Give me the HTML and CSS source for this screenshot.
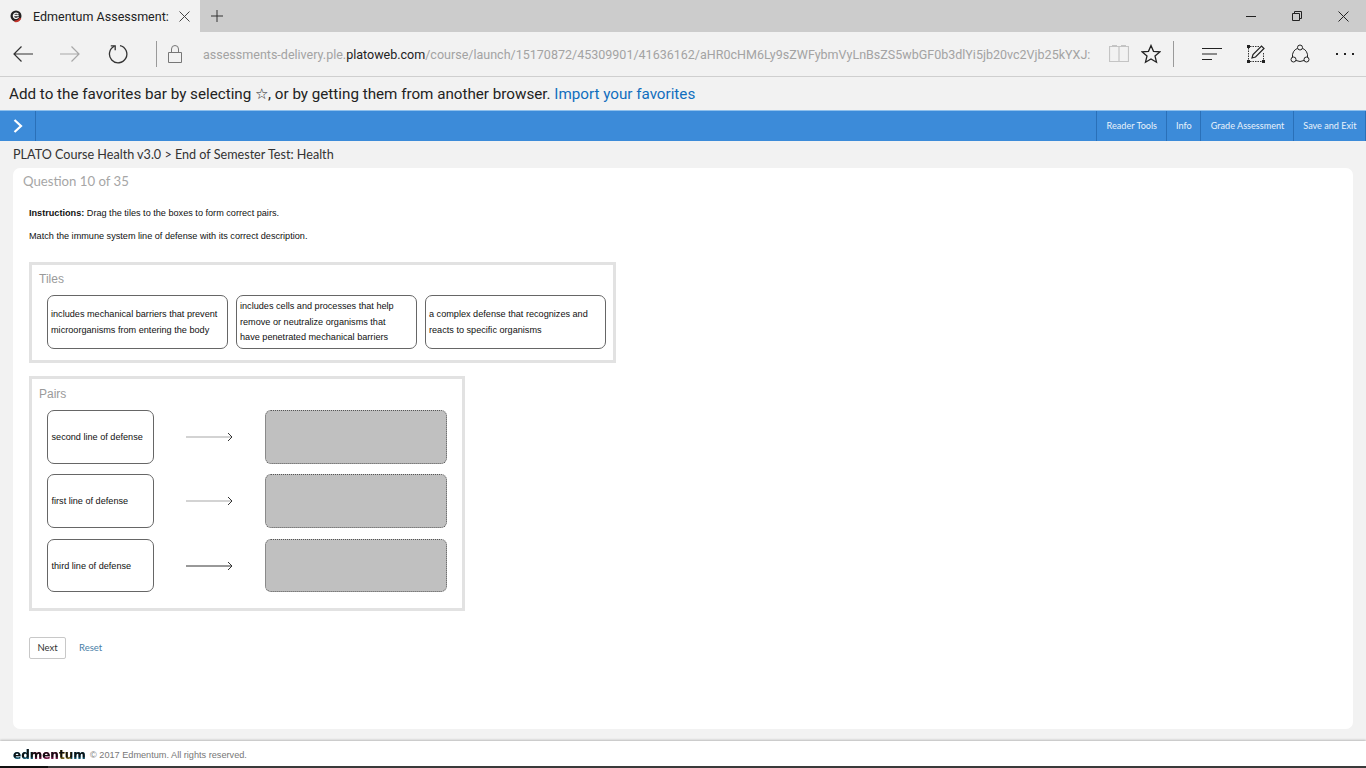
FILE: index.html
```html
<!DOCTYPE html>
<html lang="en">
<head>
<meta charset="utf-8">
<title>Edmentum Assessment</title>
<link rel="stylesheet" href="styles.css">
</head>
<body>
<div class="tabstrip">
  <div class="tab">
    <svg class="favicon" width="14" height="14" viewBox="0 0 14 14"><circle cx="7" cy="7" r="5.5" fill="#222"/><path d="M4.500 6.500h5.200M9.300 5.200A2.700 2.700 0 1 0 9.500 8" fill="none" stroke="#f2f2f2" stroke-width="1.300"/><path d="M5.500 12.200a5.500 5.500 0 0 0 6-3" stroke="#c8352b" stroke-width="1.800" fill="none"/></svg>
    <span class="tab-title">Edmentum Assessment:</span>
    <svg class="tab-close" width="11" height="11" viewBox="0 0 11 11"><path d="M.5 .5l10 10M10.500 .5l-10 10" stroke="#444" fill="none"/></svg>
  </div>
  <svg class="tab-new" width="12" height="12" viewBox="0 0 12 12"><path d="M6 0v12M0 6h12" stroke="#333" fill="none"/></svg>
  <div class="winbtns">
    <svg width="10" height="10" viewBox="0 0 10 10"><path d="M0 5.500h10" stroke="#222" fill="none"/></svg>
    <svg width="10" height="10" viewBox="0 0 10 10"><path d="M.5 2.500h7v7h-7zM2.500 2.500v-2h7v7h-2" stroke="#222" fill="none"/></svg>
    <svg width="11" height="11" viewBox="0 0 11 11"><path d="M.5 .5l10 10M10.500 .5l-10 10" stroke="#222" fill="none"/></svg>
  </div>
</div>
<div class="addressbar">
  <svg class="nav-back" width="20" height="16" viewBox="0 0 20 16"><path d="M1 8h19M8.500 .5L1 8l7.500 7.500" stroke="#333" stroke-width="1.200" fill="none"/></svg>
  <svg class="nav-forward" width="20" height="16" viewBox="0 0 20 16"><path d="M0 8h19M11.500 .5L19 8l-7.500 7.500" stroke="#a8a8a8" stroke-width="1.200" fill="none"/></svg>
  <svg class="nav-reload" width="20" height="20" viewBox="0 0 20 20"><path d="M6.500 2.200A8.700 8.700 0 1 0 12 1.600" stroke="#333" stroke-width="1.300" fill="none"/><path d="M2.800 1.800h4.400v4.400" stroke="#333" stroke-width="1.300" fill="none"/></svg>
  <span class="sep sep-left"></span>
  <svg class="lock" width="14" height="18" viewBox="0 0 14 18"><path d="M.5 7.500h13v10H.5zM3.500 7.500V4a3.500 3.500 0 0 1 7 0v3.500" stroke="#777" fill="none"/></svg>
  <div class="url"><span class="url-dim">assessments-delivery.ple.</span><span class="url-main">platoweb.com</span><span class="url-dim">/course/launch/15170872/45309901/41636162/aHR0cHM6Ly9sZWFybmVyLnBsZS5wbGF0b3dlYi5jb20vc2Vjb25kYXJ:</span></div>
  <svg class="book" width="20" height="18" viewBox="0 0 20 18"><path d="M.5 1.500h19v15H.5zM10 1.500v15M3 .5h5M12 .5h5" stroke="#c4c4c4" stroke-width="1.200" fill="none"/></svg>
  <svg class="star" width="20" height="20" viewBox="0 0 20 20"><path d="M10 1.500l2.500 5.800 6.300.6-4.800 4.100 1.500 6.200L10 14.900l-5.500 3.300L6 12 1.200 7.900l6.300-.6z" stroke="#222" stroke-width="1.300" fill="none"/></svg>
  <span class="sep sep-right"></span>
  <svg class="hub" width="20" height="14" viewBox="0 0 20 14"><path d="M0 1.500h20M0 7h15M0 12.500h10" stroke="#222" stroke-width="1.200" fill="none"/></svg>
  <svg class="note" width="20" height="20" viewBox="0 0 20 20"><path d="M2.500 4v12M4 2.500h9M4 17.500h13M17.500 9v7" stroke="#333" stroke-dasharray="1.500 1" fill="none"/><path d="M1 1h3v3H1zM1 16h3v3H1zM16 16h3v3h-3z" fill="#222"/><path d="M6 14l1-3.500L15.500 2l2.500 2.500L9.500 13z" stroke="#222" stroke-width="1.200" fill="none"/></svg>
  <svg class="share" width="20" height="20" viewBox="0 0 20 20"><circle cx="10" cy="3.500" r="2.500" stroke="#222" fill="none"/><circle cx="3.500" cy="15.500" r="2.500" stroke="#222" fill="none"/><circle cx="16.500" cy="15.500" r="2.500" stroke="#222" fill="none"/><path d="M7.600 4.300A8 8 0 0 0 2.500 13M12.400 4.300A8 8 0 0 1 17.500 13M6 16.500a9 9 0 0 0 8 0" stroke="#222" fill="none"/></svg>
  <div class="more"><i></i><i></i><i></i></div>
</div>
<div class="favbar">Add to the favorites bar by selecting ☆, or by getting them from another browser. <a class="fav-link">Import your favorites</a></div>
<div class="appbar">
  <div class="menu-toggle"><svg width="10" height="14" viewBox="0 0 10 14"><path d="M1.500 1l6.500 6-6.500 6" stroke="#fff" stroke-width="2.200" fill="none"/></svg></div>
  <div class="app-actions">
    <a class="action">Reader Tools</a>
    <a class="action">Info</a>
    <a class="action">Grade Assessment</a>
    <a class="action action-last">Save and Exit</a>
  </div>
</div>
<div class="crumb">PLATO Course Health v3.0 &gt; End of Semester Test: Health</div>
<main class="card">
  <h1 class="qnum">Question 10 of 35</h1>
  <p class="instr"><b>Instructions:</b> Drag the tiles to the boxes to form correct pairs.</p>
  <p class="prompt">Match the immune system line of defense with its correct description.</p>
  <section class="panel tiles-panel">
    <h2 class="panel-title">Tiles</h2>
    <div class="tiles">
      <div class="tile"><span>includes mechanical barriers that prevent microorganisms from entering the body</span></div>
      <div class="tile"><span>includes cells and processes that help<br>remove or neutralize organisms that<br>have penetrated mechanical barriers</span></div>
      <div class="tile"><span>a complex defense that recognizes and reacts to specific organisms</span></div>
    </div>
  </section>
  <section class="panel pairs-panel">
    <h2 class="panel-title">Pairs</h2>
    <div class="pair">
      <div class="term">second line of defense</div>
      <svg class="arrow" width="48" height="10" viewBox="0 0 48 10"><path d="M0 5h45" stroke="#c4c4c4" stroke-width="1.500" fill="none"/><path d="M42 1l4 4-4 4" stroke="#333" fill="none"/></svg>
      <div class="drop"></div>
    </div>
    <div class="pair">
      <div class="term">first line of defense</div>
      <svg class="arrow" width="48" height="10" viewBox="0 0 48 10"><path d="M0 5h45" stroke="#c4c4c4" stroke-width="1.500" fill="none"/><path d="M42 1l4 4-4 4" stroke="#333" fill="none"/></svg>
      <div class="drop"></div>
    </div>
    <div class="pair pair-last">
      <div class="term">third line of defense</div>
      <svg class="arrow" width="48" height="10" viewBox="0 0 48 10"><path d="M0 5h46M42 1l4 4-4 4" stroke="#333" fill="none"/></svg>
      <div class="drop"></div>
    </div>
  </section>
  <div class="buttons">
    <button class="btn-next">Next</button>
    <a class="reset">Reset</a>
  </div>
</main>
<footer class="footer">
  <span class="logo">edmentum</span>
  <span class="copy">© 2017 Edmentum. All rights reserved.</span>
</footer>
<div class="taskbar"><span class="task-start"></span></div>
</body>
</html>
```
FILE: styles.css
```css
* { box-sizing: border-box; }
html, body { margin: 0; padding: 0; }
body {
  width: 1366px;
  height: 768px;
  overflow: hidden;
  background: #f2f2f2;
  display: flex;
  flex-direction: column;
  font-family: "Liberation Sans", Arial, sans-serif;
  color: #222;
}
.tabstrip {
  height: 32px;
  background: #cccccc;
  display: flex;
  align-items: center;
  flex: none;
}
.tab {
  width: 200px;
  height: 32px;
  background: #f2f2f2;
  display: flex;
  align-items: center;
  padding-left: 9px;
}
.favicon { flex: none; }
.tab-title {
  font: 12.500px Roboto, sans-serif;
  color: #222;
  margin-left: 10px;
  width: 136px;
  flex: none;
  white-space: nowrap;
}
.tab-close { margin-left: 10px; flex: none; }
.tab-new { margin-left: 11px; }
.winbtns {
  margin-left: auto;
  display: flex;
  align-items: center;
  gap: 36px;
  padding-right: 17px;
}
.addressbar {
  height: 45px;
  flex: none;
  display: flex;
  align-items: center;
  border-bottom: 1px solid #cfcfcf;
  padding-left: 13px;
}
.nav-back { flex: none; }
.nav-forward { flex: none; margin-left: 27px; }
.nav-reload { flex: none; margin-left: 28px; }
.sep { width: 1px; height: 26px; background: #9a9a9a; flex: none; }
.sep-left { margin-left: 28px; }
.lock { margin-left: 11px; flex: none; }
.url {
  width: 888px;
  margin-left: 21px;
  font: 12.530px Roboto, sans-serif;
  white-space: nowrap;
  flex: none;
}
.url-dim { color: #a3a3a3; }
.url-main { color: #222; }
.book { margin-left: 18px; flex: none; }
.star { margin-left: 12px; flex: none; }
.sep-right { margin-left: 12px; }
.hub { margin-left: 28px; flex: none; }
.note { margin-left: 24px; flex: none; }
.share { margin-left: 24px; flex: none; }
.more { margin-left: 26px; display: flex; gap: 6px; flex: none; }
.more i { width: 2px; height: 2px; background: #222; display: block; }
.favbar {
  height: 33px;
  flex: none;
  padding-left: 9px;
  font: 15.200px/34px Roboto, sans-serif;
  color: #222;
  white-space: nowrap;
}
.fav-link { color: #106ebe; }
.appbar {
  height: 31px;
  flex: none;
  background: #3c8bd9;
  border-top: 1px solid #8fc0ec;
  display: flex;
  justify-content: space-between;
}
.menu-toggle {
  width: 36px;
  border-right: 1px solid #2a70b8;
  display: flex;
  align-items: center;
  justify-content: center;
}
.app-actions { display: flex; }
.action {
  font: 9.100px/29px Lato, sans-serif;
  color: #e8f2fb;
  border-left: 1px solid #2a70b8;
  padding: 0 8.500px 0 9.500px;
}
.action-last { border-right: 1px solid #2a70b8; }
.crumb {
  height: 27px;
  flex: none;
  padding-left: 13px;
  font: 12.600px/28px Lato, sans-serif;
  color: #333;
}
.card {
  margin: 0 13px;
  height: 561px;
  flex: none;
  background: #fff;
  border-radius: 7px;
  padding: 0 0 0 16px;
}
.qnum {
  margin: 0 0 0 -6px;
  font: normal 13.200px/26px Lato, sans-serif;
  color: #a6a6a6;
  height: 26px;
}
.instr, .prompt { margin: 0; font-size: 9.130px; line-height: 12px; color: #111; }
.instr { margin-top: 13px; }
.prompt { margin-top: 11px; }
.panel { border: 3px solid #e2e2e2; background: #fff; }
.panel-title {
  margin: 0;
  font-size: 12px;
  line-height: 14px;
  font-weight: normal;
  color: #9a9a9a;
  padding-left: 7px;
}
.tiles-panel {
  margin-top: 20px;
  width: 587px;
  height: 101px;
  padding-top: 7px;
}
.tiles { display: flex; gap: 8px; margin: 9px 0 0 15px; }
.tile {
  width: 181px;
  height: 54px;
  border: 1px solid #666;
  border-radius: 7px;
  padding: 1px 3px 0;
  display: flex;
  align-items: center;
  font-size: 9.130px;
  line-height: 15.600px;
  color: #111;
}
.pairs-panel {
  margin-top: 13px;
  width: 436px;
  height: 235px;
  padding-top: 8px;
}
.pair {
  display: flex;
  align-items: center;
  margin: 9px 0 0 15px;
}
.pair + .pair { margin-top: 10px; }
.pair + .pair-last { margin-top: 11px; }
.term {
  width: 107px;
  height: 54px;
  border: 1px solid #666;
  border-radius: 7px;
  padding: 0 3.500px;
  display: flex;
  align-items: center;
  font-size: 9.130px;
  color: #111;
}
.arrow { margin-left: 32px; flex: none; }
.drop {
  width: 182px;
  height: 54px;
  margin-left: 31px;
  background: #c0c0c0;
  border: 1px dotted #555;
  border-radius: 6px;
}
.pair-last .term, .pair-last .drop { height: 53px; }
.buttons {
  margin-top: 26px;
  display: flex;
  align-items: center;
}
.btn-next {
  width: 37px;
  height: 22px;
  padding: 0 0 1px;
  background: #fff;
  border: 1px solid #c8c8c8;
  border-radius: 2px;
  font: 9.500px Lato, sans-serif;
  color: #333;
}
.reset {
  margin: 0 0 2px 13px;
  font: 9.500px Lato, sans-serif;
  color: #4a7fa8;
}
.footer {
  margin-top: 12px;
  height: 25px;
  flex: none;
  background: #fff;
  box-shadow: 0 -1px 2px #bbb;
  display: flex;
  align-items: center;
  padding: 2px 0 0 13px;
}
.logo {
  font: bold 12px/16px "DejaVu Sans", sans-serif;
  width: 72px;
  flex: none;
  margin-top: 1px;
  white-space: nowrap;
  color: transparent;
  background: linear-gradient(#111 60%, rgba(17,17,17,0) 85%), linear-gradient(90deg, #1aa3d6 0 28%, #d81b80 28% 62%, #e3bd22 62% 80%, #1aa3d6 80%);
  -webkit-background-clip: text;
  background-clip: text;
}
.copy { font-size: 9.170px; color: #777; margin-left: 5px; }
.taskbar { height: 2px; background: #3a3a3a; flex: none; display: flex; }
.task-start { width: 48px; background: #111; }
```
